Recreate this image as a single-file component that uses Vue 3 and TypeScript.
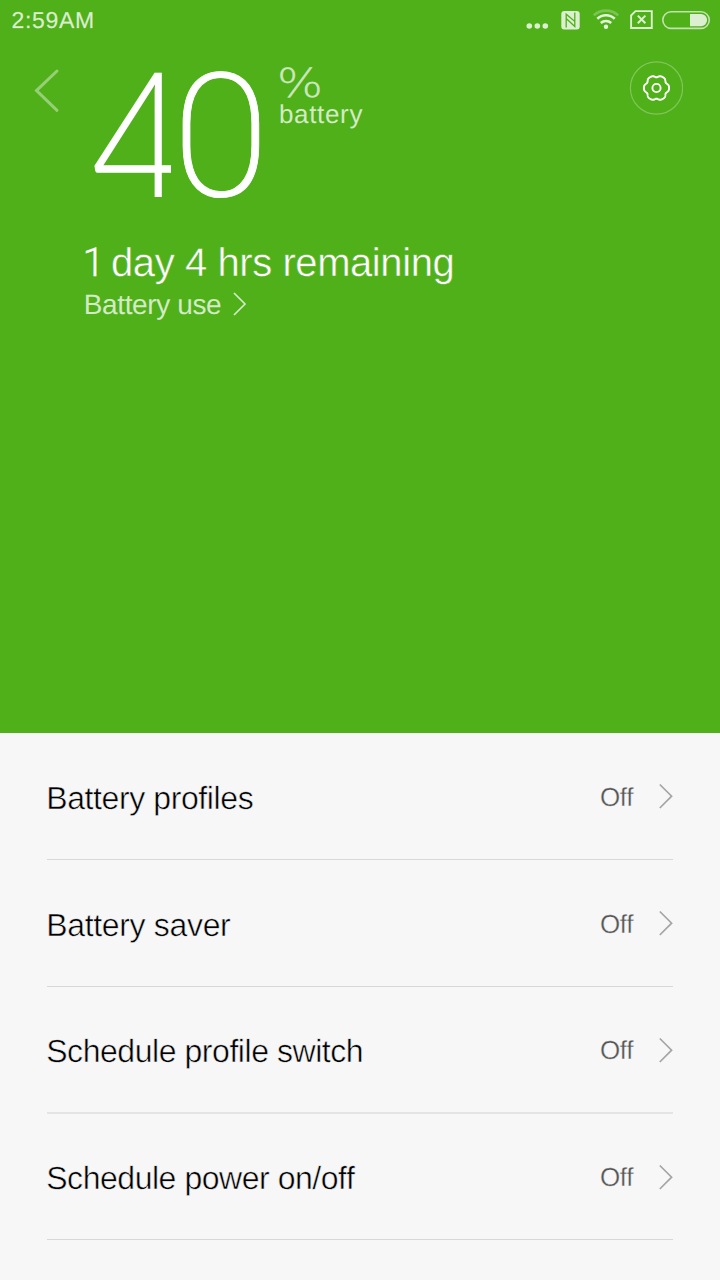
<script setup lang="ts">
interface Row { label: string; value: string; cls: string }

const rows: Row[] = [
  { label: 'Battery profiles', value: 'Off', cls: 'profiles' },
  { label: 'Battery saver', value: 'Off', cls: 'saver' },
  { label: 'Schedule profile switch', value: 'Off', cls: 'switch' },
  { label: 'Schedule power on/off', value: 'Off', cls: 'power' },
]

// Six-lobed gear outline with broad lobes and narrow notches.
const gear: string = (() => {
  const pts: string[] = []
  for (let i = 0; i < 120; i++) {
    const t = (i / 120) * Math.PI * 2
    const r = 12.6 - 1.9 * Math.pow((1 - Math.cos(6 * t)) / 2, 2)
    pts.push(`${(27 + r * Math.cos(t)).toFixed(2)} ${(27 + r * Math.sin(t)).toFixed(2)}`)
  }
  return `M${pts.join('L')}Z`
})()
</script>

<template>
  <div class="screen">
    <header class="hero">
      <div class="status">
        <span class="clock">2:59AM</span>
        <svg class="tray" width="194" height="40" viewBox="526 0 194 40">
          <g fill="#fff" fill-opacity=".8">
            <circle cx="529.3" cy="26" r="2.8" /><circle cx="537.3" cy="26" r="2.8" /><circle cx="545.3" cy="26" r="2.8" />
            <rect x="561.3" y="11" width="18.4" height="18.6" rx="3" />
          </g>
          <path d="M566.2 27.5V14.2l8.6 7.2V12.6M566.2 18.4l8.6 8V21" fill="none" stroke="#50b019" stroke-width="1.3" />
          <g fill="none" stroke="#fff" stroke-opacity=".85" stroke-width="2.6">
            <path d="M597.3 18.8a12.5 12.5 0 0 1 17.4 0" />
            <path d="M600.8 22.9a8 8 0 0 1 10.4 0" />
            <path d="M593.8 15.4a18 18 0 0 1 24.4 0" stroke-opacity=".25" />
          </g>
          <circle cx="606" cy="26.7" r="2.2" fill="#fff" fill-opacity=".85" />
          <path d="M635.5 11.1H651.8V28H631.1V15.5Z" fill="none" stroke="#fff" stroke-opacity=".8" stroke-width="1.9" />
          <path d="M637.8 15.6l7.6 7.6m0-7.6l-7.6 7.6" stroke="#fff" stroke-opacity=".8" stroke-width="2" />
          <rect x="662.8" y="11.8" width="46.5" height="16.6" rx="8.3" fill="none" stroke="#fff" stroke-opacity=".65" stroke-width="1.6" />
          <path d="M690 14h11a6.1 6.1 0 0 1 0 12.2h-11Z" fill="#fff" fill-opacity=".8" />
        </svg>
      </div>
      <div class="top">
        <svg class="back" width="30" height="50" viewBox="30 66 30 50">
          <path d="M57 71L36.5 90.6L57 110.3" fill="none" stroke="#fff" stroke-opacity=".4" stroke-width="3" stroke-linecap="round" />
        </svg>
        <svg class="level" width="82" height="132" viewBox="89 65 82 132">
          <text class="four" transform="translate(91.1 212.5) scale(.983 1.15)">4</text>
        </svg>
        <svg class="level" width="98" height="140" viewBox="171 65 98 140">
          <text class="zero" transform="translate(221 195.5) scale(1 .98)">0</text>
        </svg>
        <div class="unit">
          <svg width="46" height="31" viewBox="279 67 46 31"><text class="pct" transform="translate(300 96.5) scale(1.22 1)">%</text></svg>
          <span class="word">battery</span>
        </div>
        <svg class="gear" width="54" height="54" viewBox="-.5 0 54 54" fill="none" stroke="#fff">
          <circle cx="27" cy="27" r="26.1" stroke-opacity=".28" stroke-width="1.2" />
          <path :d="gear" stroke-width="1.9" /><circle cx="27" cy="27" r="4.1" stroke-width="1.9" />
        </svg>
      </div>
      <div class="remain"><span class="one">1</span> day 4 hrs remaining</div>
      <div class="use"><span>Battery use</span>
        <svg width="14" height="26" viewBox="0 0 14 26"><path d="M1 1L12 12L1 23" fill="none" stroke="#fff" stroke-opacity=".75" stroke-width="1.7" /></svg>
      </div>
    </header>
    <main class="list">
      <div v-for="r in rows" :key="r.label" class="row" :class="r.cls">
        <span class="label">{{ r.label }}</span>
        <span class="value">{{ r.value }}</span>
        <svg class="chev" width="15" height="26" viewBox="0 0 15 26"><path d="M1.8 1.5L13.6 13.2L1.8 25" fill="none" stroke="#a5a5a5" stroke-width="1.7" /></svg>
      </div>
    </main>
  </div>
</template>

<style>
html, body { margin: 0; overflow: hidden; }
</style>

<style scoped>
.screen { width: 720px; height: 1280px; overflow: hidden; background: #f7f7f7; font-family: "Liberation Sans", Arial, sans-serif; text-rendering: geometricPrecision; }
svg { display: block; flex: none; }
.hero { height: 733px; box-sizing: border-box; background: #50b019; overflow: hidden; }
.status { display: flex; justify-content: space-between; height: 40px; }
.clock { padding-left: 11.5px; font-size: 23px; line-height: 41px; letter-spacing: .7px; color: rgba(255,255,255,.8); -webkit-text-stroke: .3px rgba(255,255,255,.4); }
.top { display: flex; align-items: flex-start; height: 200px; }
.back { margin: 26px 29px 0 30px; }
.level { margin-top: 25px; fill: #fff; }
.four { font: 300 172px Lato, sans-serif; }
.zero { font: 200 176px Roboto, sans-serif; text-anchor: middle; stroke: #fff; stroke-width: .8px; }
.unit { display: flex; flex-direction: column; margin: 27px 0 0 10px; color: rgba(255,255,255,.75); }
.pct { font: 200 40px "DejaVu Sans", sans-serif; text-anchor: middle; fill: rgba(255,255,255,.7); stroke: rgba(255,255,255,.3); stroke-width: .6px; }
.word { font-size: 26px; line-height: 32px; letter-spacing: .65px; }
.gear { margin: 21px 37px 0 auto; }
.remain { margin-left: 83.5px; padding-top: 1px; font-size: 40px; line-height: 44px; letter-spacing: -.42px; color: #fff; -webkit-text-stroke: .5px #50b019; }
.one { margin: 0 -4px 0 -1px; font-family: Roboto, sans-serif; font-weight: 300; -webkit-text-stroke: .4px #fff; }
.use { display: flex; align-items: center; gap: 11.5px; margin-left: 83.8px; font-size: 28px; line-height: 40px; letter-spacing: -.38px; color: rgba(255,255,255,.75); }
.list { padding: 0 47px; }
.row { display: flex; box-sizing: border-box; height: 127px; border-bottom: 1px solid #d8d8d8; align-items: center; }
.row.switch { border-bottom: 2px solid #e4e4e4; }
.row.power { height: 126px; }
.label { flex: 1; margin-left: -.8px; padding-top: 4px; font-size: 32px; line-height: 36px; color: #000; letter-spacing: -.4px; -webkit-text-stroke: .5px #f7f7f7; }
.saver .label { letter-spacing: -.33px; }
.switch .label { letter-spacing: -.45px; padding-top: 3px; }
.power .label { letter-spacing: -.46px; padding-top: 3px; }
.value { padding-top: 2px; font-size: 26px; letter-spacing: -.4px; color: #555; -webkit-text-stroke: .3px #f7f7f7; margin-right: 25px; }
</style>
